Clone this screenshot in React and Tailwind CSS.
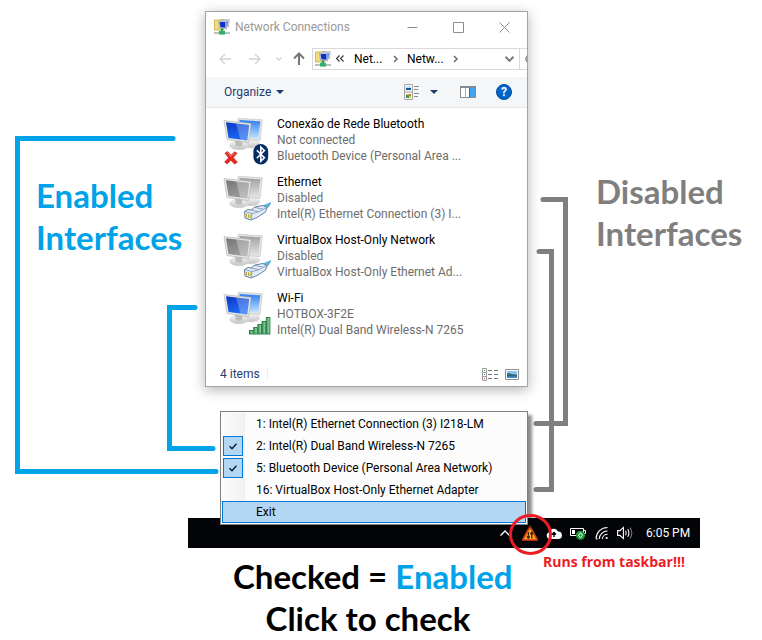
import React from "react";

const connections = [
  { name: "Conexão de Rede Bluetooth", status: "Not connected", device: "Bluetooth Device (Personal Area ...", on: true, badge: "bluetooth" },
  { name: "Ethernet", status: "Disabled", device: "Intel(R) Ethernet Connection (3) I...", on: false, badge: "cable" },
  { name: "VirtualBox Host-Only Network", status: "Disabled", device: "VirtualBox Host-Only Ethernet Ad...", on: false, badge: "cable" },
  { name: "Wi-Fi", status: "HOTBOX-3F2E", device: "Intel(R) Dual Band Wireless-N 7265", on: true, badge: "signal" },
];

const adapters = [
  { label: "1: Intel(R) Ethernet Connection (3) I218-LM", checked: false },
  { label: "2: Intel(R) Dual Band Wireless-N 7265", checked: true },
  { label: "5: Bluetooth Device (Personal Area Network)", checked: true },
  { label: "16: VirtualBox Host-Only Ethernet Adapter", checked: false },
];

function Gradients() {
  return (
    <svg className="absolute h-0 w-0" aria-hidden="true">
      <defs>
        <linearGradient id="screenOn" x1="0" y1="0" x2="0.4" y2="1">
          <stop offset="0" stopColor="#0a35c4" />
          <stop offset="1" stopColor="#1f6cf5" />
        </linearGradient>
        <linearGradient id="screenBackOn" x1="0" y1="0" x2="0" y2="1">
          <stop offset="0" stopColor="#2f7df0" />
          <stop offset="1" stopColor="#c5e6ff" />
        </linearGradient>
        <linearGradient id="screenOff" x1="0" y1="0" x2="0.4" y2="1">
          <stop offset="0" stopColor="#757575" />
          <stop offset="1" stopColor="#9c9c9c" />
        </linearGradient>
        <linearGradient id="screenBackOff" x1="0" y1="0" x2="0" y2="1">
          <stop offset="0" stopColor="#a0a0a0" />
          <stop offset="1" stopColor="#e2e2e2" />
        </linearGradient>
        <linearGradient id="stand" x1="0" y1="0" x2="0" y2="1">
          <stop offset="0" stopColor="#f4f4f4" />
          <stop offset="1" stopColor="#c2c2c2" />
        </linearGradient>
        <linearGradient id="signalBar" x1="0" y1="0" x2="1" y2="0">
          <stop offset="0" stopColor="#3f9a5d" />
          <stop offset="1" stopColor="#a3dfb0" />
        </linearGradient>
      </defs>
    </svg>
  );
}

function ConnectionIcon({ on, badge }) {
  return (
    <svg className="h-[50px] w-[50px] shrink-0" viewBox="0 0 50 50" aria-hidden="true">
      <ellipse cx="30" cy="28" rx="9" ry="4" fill="url(#stand)" stroke="#dcdcdc" strokeWidth="0.5" />
      <path d="M17 2.3 41.3 3.8 39 24.5 19 23Z" fill="#e4e4e2" stroke="#c6c6c4" strokeWidth="0.7" />
      <path d="M18.500 4 39.300 5.300 37.300 22.800 20 21.500Z" fill={on ? "url(#screenBackOn)" : "url(#screenBackOff)"} />
      <ellipse cx="18" cy="29.500" rx="9.300" ry="4.300" fill="url(#stand)" stroke="#cecece" strokeWidth="0.5" />
      <path d="M14 23.500 21.500 24.500 21 30Q17.500 31.500 14.500 29.500Z" fill="#bcbcbc" />
      <path d="M3 4.600 30 7.600 27.500 26.500 6 23.500Z" fill="#e9e9e7" stroke="#b4b4b2" strokeWidth="0.7" />
      <path d="M5 6.300 28.200 8.900 26.200 24.600 7.500 22Z" fill={on ? "url(#screenOn)" : "url(#screenOff)"} />
      <path d="M15 7.400 28.200 8.900 26.200 24.600 19.500 23.700Z" fill="#fff" fillOpacity={on ? 0.25 : 0.3} />
      {badge === "bluetooth" && (
        <g>
          <path d="M4 37.2 6.6 35.6 10 39.2 13.6 35.8 16 37.2 12.2 41.6 16.4 46.2 13.6 48 9.8 44.2 6 48 3.6 46 7.6 41.8Z" fill="#e8271c" stroke="#b51510" strokeWidth="0.6" />
          <path d="M6.4 36.8 10 40.4 13.6 37" fill="none" stroke="#ff8a78" strokeWidth="1" />
          <rect x="32.4" y="28" width="14.8" height="20.4" rx="7.4" fill="#062c66" />
          <path d="M35.8 34.2 43.4 41.8 39.8 45.2V31.2L43.4 34.6 35.8 42.2" fill="none" stroke="#fff" strokeWidth="1.6" />
        </g>
      )}
      {badge === "cable" && (
        <g strokeLinejoin="round">
          <path d="M40 32.500 45 30.500 50 28.500 48 32.500 44 35.500Z" fill="#58b7e2" stroke="#4aa0d0" strokeWidth="0.6" />
          <path d="M23.500 37.500 27 35.500 30 36 34 33 41.500 31.500 46 33.500 44.500 38 36 43.500 30 46 24 44Z" fill="#e3edf8" stroke="#63809f" strokeWidth="1" />
          <path d="M23.500 37.500 31 39.500 30.500 45.500M31 39.500 37 38 45.500 33.800M30 36 37.500 37.500M34 33.500 42 35" fill="none" stroke="#7590b2" strokeWidth="0.8" />
          <path d="M25.500 39.800V43.200M27.500 40.300V43.800M29.300 40.600V44.200" stroke="#b9a436" strokeWidth="1" />
        </g>
      )}
      {badge === "signal" && (
        <g fill="url(#signalBar)" stroke="#217a43" strokeWidth="0.9">
          <rect x="28.5" y="40.5" width="3.6" height="3.5" />
          <rect x="32.7" y="37.5" width="3.6" height="6.5" />
          <rect x="36.9" y="34.5" width="3.6" height="9.5" />
          <rect x="41.1" y="31.5" width="3.6" height="12.5" />
          <rect x="45.3" y="27.5" width="3.6" height="16.5" />
        </g>
      )}
    </svg>
  );
}

function FolderIcon() {
  return (
    <svg className="h-4 w-4 shrink-0" viewBox="0 0 16 16" aria-hidden="true">
      <path d="M0.5 1h5l1-.8h3V11H.5z" fill="#f3dc7c" stroke="#c9a83d" strokeWidth="0.8" />
      <path d="M8 .6h7.4l-1 7.4H8z" fill="#d9dde6" stroke="#9aa2b2" strokeWidth="0.6" />
      <path d="M9.5 2h4.6l-.6 5H9.5z" fill="#5c8df0" />
      <path d="M4.6 2h7.8v8l-7-.6z" fill="#d4d9e4" stroke="#8b93a6" strokeWidth="0.6" />
      <path d="M5.600 3h5.800v5.800l-5-.6z" fill="#1030c8" />
      <path d="M8 9.500v4" stroke="#1f9d5b" strokeWidth="2" />
      <path d="M0 14h16" stroke="#b9bfbc" strokeWidth="2" />
      <path d="M5 11.800h6v3.800H5z" fill="#2fb46d" />
    </svg>
  );
}

function Caret() {
  return (
    <svg className="h-1 w-2" viewBox="0 0 8 4" aria-hidden="true">
      <path d="M0 0h8L4 4z" fill="#1e3c6e" />
    </svg>
  );
}

function ChevronRight() {
  return (
    <svg className="h-2 w-[6px]" viewBox="0 0 6 8" fill="none" stroke="#6d6d6d" strokeWidth="1.5" aria-hidden="true">
      <path d="M1 1l3 3-3 3" />
    </svg>
  );
}

function NetworkWindow() {
  return (
    <section className="overflow-hidden border border-[#a3a3a3] bg-white shadow-[0_3px_12px_rgba(0,0,0,0.3)]">
      <header className="flex h-[30px] items-center pl-2">
        <FolderIcon />
        <h1 className="ml-[5px] flex-1 text-[12px] font-normal text-[#999]">Network Connections</h1>
        <button aria-label="Minimize" className="flex h-full w-[46px] items-center justify-center">
          <svg className="h-[11px] w-[11px]" viewBox="0 0 11 11" stroke="#8c8c8c" aria-hidden="true"><path d="M.5 5.5h10" /></svg>
        </button>
        <button aria-label="Maximize" className="flex h-full w-[46px] items-center justify-center">
          <svg className="h-[11px] w-[11px]" viewBox="0 0 11 11" fill="none" stroke="#8c8c8c" aria-hidden="true"><path d="M.5.5h10v10H.5z" /></svg>
        </button>
        <button aria-label="Close" className="flex h-full w-[46px] items-center justify-center">
          <svg className="h-[11px] w-[11px]" viewBox="0 0 11 11" stroke="#8c8c8c" aria-hidden="true"><path d="M.5.5l10 10M10.5.5l-10 10" /></svg>
        </button>
      </header>

      <nav className="flex h-[35px] items-center pb-[2px] pl-[13px]">
        <button aria-label="Back">
          <svg className="h-3 w-3" viewBox="0 0 12 12" fill="none" stroke="#d4d4d4" strokeWidth="1.5" aria-hidden="true"><path d="M12 6H1M6 1L1 6l5 5" /></svg>
        </button>
        <button aria-label="Forward" className="ml-[18px]">
          <svg className="h-3 w-3" viewBox="0 0 12 12" fill="none" stroke="#d4d4d4" strokeWidth="1.5" aria-hidden="true"><path d="M0 6h11M6 1l5 5-5 5" /></svg>
        </button>
        <button aria-label="Recent locations" className="ml-[15px]">
          <svg className="h-1 w-[6px]" viewBox="0 0 6 4" fill="none" stroke="#d0d0d0" strokeWidth="1.3" aria-hidden="true"><path d="M.5.5L3 3 5.5.5" /></svg>
        </button>
        <button aria-label="Up" className="ml-[11px]">
          <svg className="h-[13px] w-3" viewBox="0 0 12 13" fill="none" stroke="#747474" strokeWidth="2" aria-hidden="true"><path d="M6 13V2M1 6.5l5-5 5 5" /></svg>
        </button>
        <div className="ml-[7px] flex h-[22px] flex-1 items-center border border-r-0 border-[#d9d9d9] pl-[2px] text-[12px]">
          <FolderIcon />
          <svg className="ml-[5px] h-[7px] w-2" viewBox="0 0 8 7" fill="none" stroke="#333" strokeWidth="1.1" aria-hidden="true"><path d="M3.5.5l-3 3 3 3M7.5.5l-3 3 3 3" /></svg>
          <button className="ml-[10px] mr-2 w-[31px] text-left">Net...</button>
          <ChevronRight />
          <button className="ml-2 mr-2 w-[38px] text-left">Netw...</button>
          <ChevronRight />
          <button aria-label="Previous locations" className="ml-auto mr-[5px]">
            <svg className="h-[6px] w-[9px]" viewBox="0 0 9 6" fill="none" stroke="#7c7c7c" strokeWidth="2" aria-hidden="true"><path d="M.5.8l4 4 4-4" /></svg>
          </button>
        </div>
        <div className="h-[22px] w-2 overflow-hidden border border-r-0 border-[#d9d9d9] pl-[5px] pt-[5px]">
          <svg className="h-[10px] w-[10px]" viewBox="0 0 10 10" fill="none" stroke="#8c8c8c" strokeWidth="1.5" aria-hidden="true"><circle cx="5" cy="5" r="4" /></svg>
        </div>
      </nav>

      <div className="flex h-[31px] items-center border-b border-[#e4e8ec] bg-[#f5f6f7] pl-[18px] pr-[15px] text-[12px] text-[#1e3c6e]">
        <button className="flex items-center gap-[5px]">Organize <Caret /></button>
        <button aria-label="Change your view" className="ml-auto flex items-center gap-[10px]">
          <svg className="h-4 w-4" viewBox="0 0 16 16" fill="none" aria-hidden="true">
            <path d="M.5.5h8v15h-8zM.5 8h8" stroke="#a6a6a6" />
            <path d="M2 2h5v4H2z" fill="#c4e0ff" /><path d="M2 4h5v2H2z" fill="#1c5391" />
            <path d="M2 10h5v4H2z" fill="#f0c54c" /><path d="M2 11h3v3H2z" fill="#3d9b4f" /><path d="M5 10h2v2H5z" fill="#e07038" />
            <path d="M10 2.5h5M10 5.5h4M10 9.5h5M10 12.5h4" stroke="#8a8a8a" />
          </svg>
          <Caret />
        </button>
        <button aria-label="Show the preview pane" className="ml-[22px]">
          <svg className="h-3 w-4" viewBox="0 0 16 12" fill="none" aria-hidden="true">
            <path d="M.5.5h15v11H.5z" fill="#fff" stroke="#8b8b8b" />
            <path d="M0 1h16" stroke="#7c8a99" strokeWidth="2" />
            <path d="M5.5 2v9" stroke="#b0b0b0" /><path d="M9 2h6v9H9z" fill="#45a3ee" /><path d="M9.5 2v9" stroke="#1e6fb8" />
          </svg>
        </button>
        <button aria-label="Help" className="ml-5 flex h-4 w-4 items-center justify-center rounded-full border border-[#00489c] bg-[#0066cc] text-[12px] font-bold leading-none text-white">?</button>
      </div>

      <ul className="mb-6 mt-2 flex flex-col gap-[10px] pl-[15px]">
        {connections.map((c) => (
          <li key={c.name} className="flex h-12 gap-[6px] text-[12px] leading-4 text-[#6d6d6d]">
            <ConnectionIcon on={c.on} badge={c.badge} />
            <div className="whitespace-nowrap">
              <h2 className="font-normal text-black">{c.name}</h2>
              <p>{c.status}</p>
              <p>{c.device}</p>
            </div>
          </li>
        ))}
      </ul>

      <footer className="flex h-6 items-center pl-[14px] pr-2 text-[12px] text-[#1e3c6e]">
        <span className="flex-1"><span className="inline-block w-12 border-r border-[#ededed] leading-3">4 items</span></span>
        <button aria-label="Details view">
          <svg className="h-[13px] w-4" viewBox="0 0 16 13" fill="none" aria-hidden="true">
            <path d="M.5.5h4v12h-4zM.5 4.5h4M.5 8.5h4" stroke="#9c9c9c" />
            <path d="M2 2h1v1H2z" fill="#2d8a4e" /><path d="M2 6h1v1H2z" fill="#2b7de0" /><path d="M2 10h1v1H2z" fill="#d33" />
            <path d="M6 2.5h4M12 2.5h4M6 6.5h4M12 6.5h4M6 10.5h4M12 10.5h4" stroke="#777" />
          </svg>
        </button>
        <button aria-label="Large icons view" className="ml-[7px]">
          <svg className="h-[11px] w-[14px]" viewBox="0 0 14 11" aria-hidden="true">
            <path d="M.5.5h13v10H.5z" fill="#fff" stroke="#8f8f8f" />
            <path d="M2 2h10v7H2z" fill="#8fc1f5" /><path d="M2 4.5c3-1 4 1 10 1V9H2z" fill="#2d6a72" /><path d="M2 7.5h10V9H2z" fill="#4b8fd6" />
          </svg>
        </button>
      </footer>
    </section>
  );
}

function AdapterMenu() {
  return (
    <form className="relative z-10 ml-[15px] mt-6 border border-[#808080] bg-[#fcfcfc] p-px text-[12px] text-black shadow-[4px_4px_3px_rgba(0,0,0,0.45)]">
      {adapters.map((a) => (
        <label key={a.label} className="flex h-[22px] items-center whitespace-nowrap">
          <span className="flex h-full w-[23px] items-center bg-linear-to-r from-[#fcfcfc] to-[#f1f1f1] pl-px">
            <span className="grid h-5 w-5 place-items-center">
              <input type="checkbox" defaultChecked={a.checked} className="peer col-start-1 row-start-1 h-5 w-5 appearance-none checked:border checked:border-[#0078d7] checked:bg-[#b3d7f3]" />
              <svg className="pointer-events-none invisible col-start-1 row-start-1 h-[7px] w-2 peer-checked:visible" viewBox="0 0 8 7" fill="none" stroke="#101a30" strokeWidth="1.5" aria-hidden="true"><path d="M.5 3.2l2.5 2.5L7.5.8" /></svg>
            </span>
          </span>
          <span className="ml-[11px]">{a.label}</span>
        </label>
      ))}
      <button type="button" className="block h-[22px] w-full border border-[#0078d7] bg-[#b3d7f3] pl-[33px] text-left">Exit</button>
    </form>
  );
}

function Taskbar() {
  return (
    <div className="ml-[188px] mt-[-7px] flex h-[30px] w-[512px] items-center justify-end bg-[#020408] pr-[11px] text-white">
      <button aria-label="Show hidden icons">
        <svg className="h-[6px] w-[10px]" viewBox="0 0 10 6" fill="none" stroke="#fff" strokeWidth="1.3" aria-hidden="true"><path d="M.5 5.5L5 1l4.5 4.5" /></svg>
      </button>
      <button aria-label="Adapter switcher" className="relative ml-3">
        <svg className="h-4 w-4" viewBox="0 0 16 16" aria-hidden="true">
          <path d="M8 1L15.3 15H.7z" fill="#f5a623" stroke="#e23a1b" strokeWidth="1.6" strokeLinejoin="round" />
          <path d="M6.3 7v6M4.9 11.3l1.4 1.9 1.4-1.9M9.8 13.4v-6M8.4 9.2l1.4-1.9 1.4 1.9" fill="none" stroke="#3a1c08" strokeWidth="1.2" />
        </svg>
        <svg className="pointer-events-none absolute left-1/2 top-1/2 z-20 h-11 w-11 -translate-x-1/2 -translate-y-1/2" viewBox="0 0 44 44" fill="none" aria-hidden="true">
          <ellipse cx="22.500" cy="23.500" rx="20" ry="19" stroke="#ed1c24" strokeWidth="3" />
        </svg>
      </button>
      <button aria-label="Cloud sync" className="ml-2">
        <svg className="h-[11px] w-4" viewBox="0 0 16 11" aria-hidden="true">
          <path d="M4 11a3.5 3.5 0 01-.6-6.9A4.6 4.6 0 0112 3.6 3.7 3.7 0 0112.4 11z" fill="#fff" />
          <path d="M8 9V5M6 6.6l2-2 2 2" fill="none" stroke="#020408" strokeWidth="1.4" />
        </svg>
      </button>
      <button aria-label="Battery" className="ml-2">
        <svg className="h-[14px] w-4" viewBox="0 0 16 14" fill="none" aria-hidden="true">
          <path d="M.5 2.5h13v7H.5z" stroke="#fff" /><path d="M2 4h3v4H2z" fill="#fff" /><path d="M14 4.500h1.500v3H14" stroke="#fff" />
          <circle cx="10.500" cy="9.300" r="4.600" fill="#1c9a3c" />
          <path d="M10.500 6.800l2 2.500-2 2.500-2-2.500z" stroke="#fff" strokeWidth="1" />
        </svg>
      </button>
      <button aria-label="Wireless network" className="ml-[9px]">
        <svg className="h-[14px] w-[14px]" viewBox="0 0 14 14" fill="none" stroke="#fff" strokeWidth="1.1" aria-hidden="true">
          <path d="M1 12.500A11.500 11.500 0 0112.500 1.500M4.200 13A8.300 8.300 0 0112.500 5M7.400 13A5.100 5.100 0 0112.500 8.300" />
          <path d="M1 12.500l1.500.8" /><circle cx="11.700" cy="12" r="1.100" fill="#fff" stroke="none" />
        </svg>
      </button>
      <button aria-label="Volume" className="ml-2">
        <svg className="h-[14px] w-4" viewBox="0 0 16 14" fill="none" stroke="#fff" strokeWidth="1.1" aria-hidden="true">
          <path d="M.6 4.600h2.400L6.400 1.400v11.200L3 9.400H.6z" />
          <path d="M8.500 4.800q1.500 2.200 0 4.400M10.700 3.200q2.500 3.800 0 7.600" /><path d="M13 1.600q3.600 5.400 0 10.800" stroke="#777" />
        </svg>
      </button>
      <time className="ml-[13px] w-[43px] whitespace-nowrap text-[12px]">6:05 PM</time>
    </div>
  );
}

export default function App() {
  return (
    <main className="relative min-h-screen overflow-hidden bg-white font-['Roboto','Noto_Sans',sans-serif]">
      <Gradients />
      <div className="flex pt-[11px]">
        <aside className="w-[205px] shrink-0 pl-9 pt-[163px] font-['Lato',sans-serif] text-[33px] font-bold leading-[42px] text-[#00a2e8]">
          Enabled<br />Interfaces
        </aside>
        <div className="w-[323px] shrink-0">
          <NetworkWindow />
          <AdapterMenu />
        </div>
        <aside className="flex-1 pl-[68px] pt-[159px] font-['Lato',sans-serif] text-[33px] font-bold leading-[42px] text-[#7f7f7f]">
          Disabled<br />Interfaces
        </aside>
      </div>
      <Taskbar />
      <div className="flex pl-[233px] pt-[7px]">
        <div className="w-[278px] shrink-0 whitespace-nowrap text-center font-['Lato',sans-serif] text-[33px] font-bold leading-[42px] text-black">
          <p>Checked = <span className="text-[#00a2e8]">Enabled</span></p>
          <p className="pr-2">Click to check</p>
        </div>
        <p className="ml-8 whitespace-nowrap font-['Open_Sans',sans-serif] text-[14px] font-bold leading-[14px] text-[#ed1c24]">Runs from taskbar!!!</p>
      </div>
      <svg className="pointer-events-none absolute left-0 top-0 h-[640px] w-[762px]" viewBox="0 0 762 640" fill="none" strokeWidth="5" strokeLinecap="round" aria-hidden="true">
        <path d="M173 138.500H17.500V471.500H216" stroke="#00a2e8" />
        <path d="M195 307.500H169.500V448.500H213" stroke="#00a2e8" />
        <path d="M543 199.500H565.500V423.500H536" stroke="#7f7f7f" />
        <path d="M539 251.500H551.500V489.500H536" stroke="#7f7f7f" />
      </svg>
    </main>
  );
}
